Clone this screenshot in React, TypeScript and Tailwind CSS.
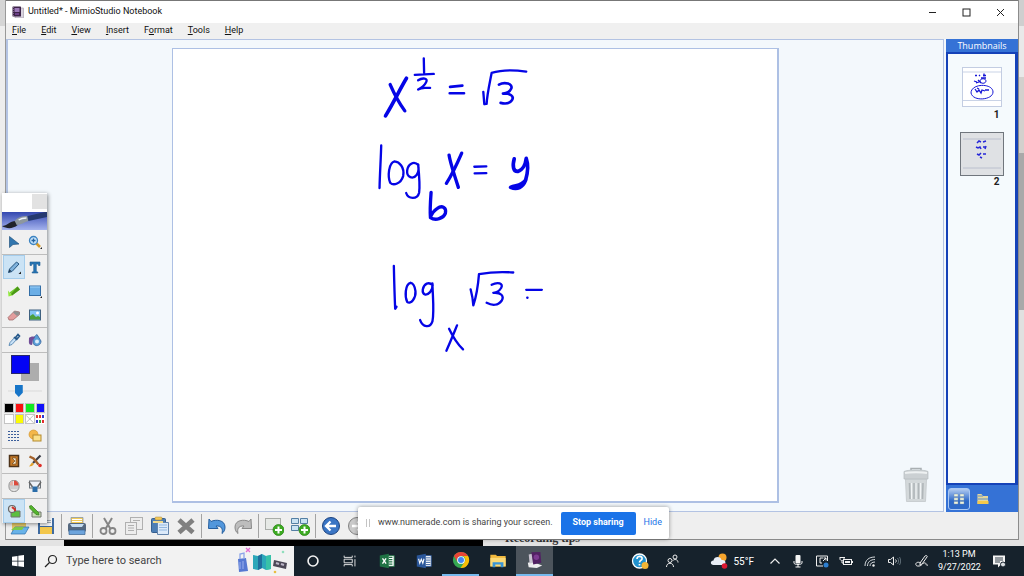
import type { ReactNode } from "react";
import { useState } from "react";

type IconProps = { children: ReactNode; className?: string; box?: string };

function Icon({ children, className = "size-5", box = "0 0 20 20" }: IconProps) {
  return (
    <svg viewBox={box} className={className} fill="none" aria-hidden="true">
      {children}
    </svg>
  );
}

/* title bar + menus */

const menus = [
  { before: "", key: "F", after: "ile" },
  { before: "", key: "E", after: "dit" },
  { before: "", key: "V", after: "iew" },
  { before: "", key: "I", after: "nsert" },
  { before: "F", key: "o", after: "rmat" },
  { before: "", key: "T", after: "ools" },
  { before: "", key: "H", after: "elp" },
];

function TitleBar() {
  return (
    <header className="flex h-[22px] shrink-0 items-center bg-white pl-[6px]">
      <Icon className="size-3" box="0 0 12 12">
        <rect x="3" y="2" width="8.5" height="10" fill="#d9d3df" stroke="#8d8695" strokeWidth=".5" />
        <rect x=".5" y=".5" width="8.5" height="10" rx=".6" fill="#3c2348" />
        <rect x="2.5" y="2" width="5" height="4" fill="#9b78b8" />
        <path d="M1.5 1v9" stroke="#9a8aa5" strokeWidth=".7" strokeDasharray="1 1" />
        <rect x="3" y="7" width="4" height="2" fill="#6b3f86" />
      </Icon>
      <h1 className="ml-1 text-[9px] text-[#111]">Untitled* - MimioStudio Notebook</h1>
      <div className="mr-px ml-auto flex">
        <button aria-label="Minimize" className="flex h-5 w-[34px] items-center justify-center">
          <Icon className="size-[9px]" box="0 0 9 9">
            <path d="M1 4.5h7" stroke="#222" />
          </Icon>
        </button>
        <button aria-label="Maximize" className="flex h-5 w-[34px] items-center justify-center">
          <Icon className="size-[9px]" box="0 0 9 9">
            <rect x="1" y="1" width="7" height="7" stroke="#222" />
          </Icon>
        </button>
        <button aria-label="Close" className="flex h-5 w-[34px] items-center justify-center">
          <Icon className="size-[9px]" box="0 0 9 9">
            <path d="M1 1l7 7M8 1l-7 7" stroke="#222" />
          </Icon>
        </button>
      </div>
    </header>
  );
}

function MenuBar() {
  return (
    <nav className="flex h-4 shrink-0 items-center gap-[15px] bg-[#f0f0f0] pl-[6px] text-[9px] text-[#111]">
      {menus.map((m) => (
        <button key={m.key + m.after}>
          {m.before}
          <span className="underline">{m.key}</span>
          {m.after}
        </button>
      ))}
    </nav>
  );
}

/* notebook page */

function Handwriting() {
  return (
    <svg
      viewBox="173 49 604 453"
      className="size-full"
      fill="none"
      stroke="#0505e6"
      strokeLinecap="round"
      strokeLinejoin="round"
      role="img"
      aria-label="Handwritten equations"
    >
      <g transform="translate(360 46) scale(.33333)" strokeWidth="8">
        <path d="M91 116C98 132 116 169 135 195" strokeWidth="10" />
        <path d="M140 97C121 128 105 164 77 210" strokeWidth="11" />
        <path d="M192 37L193 80M165 87L222 84M175 103C189 94 206 97 199 109C193 121 181 128 175 131C188 122 198 127 211 126" strokeWidth="7" />
        <path d="M271 123L308 119M270 142L313 142" />
        <path d="M371 138L374 175L381 174C382 148 390 112 396 81C423 72 460 71 500 77" strokeWidth="7" />
        <path d="M418 116C435 107 461 113 455 128C450 140 438 143 430 143C452 142 465 151 457 163C449 175 435 174 423 171" />
        <path d="M64 299C63 340 60 380 59 427" strokeWidth="7" />
        <path d="M104 347C86 352 83 392 91 411C101 421 123 414 130 391C135 364 118 348 104 347" strokeWidth="7" />
        <path d="M176 358C162 344 144 355 142 375C140 396 160 402 171 387C177 378 177 366 175 356C178 386 181 420 178 441C173 462 145 461 139 442" strokeWidth="7" />
        <path d="M268 328C272 353 284 389 296 425" strokeWidth="10" />
        <path d="M306 322C293 352 278 385 260 413" strokeWidth="10" />
        <path d="M344 363L380 362M345 383L380 382" strokeWidth="7" />
        <path d="M464 339C458 361 461 378 475 377C490 373 498 354 500 338C507 358 505 381 498 404C490 425 473 433 453 425C468 417 484 423 499 402" strokeWidth="11" />
        <path d="M214 440C212 467 210 493 212 516C228 527 251 518 257 503C261 486 247 478 233 488C222 495 215 506 212 516" strokeWidth="10" />
      </g>
      <g transform="translate(370 251) scale(.33333)" strokeWidth="7">
        <path d="M72 46C73 89 74 131 76 175L80 169" />
        <path d="M122 97C105 102 105 139 112 154C123 164 139 142 137 122C135 106 130 98 122 97" />
        <path d="M189 104C177 93 163 99 159 117C157 134 170 137 181 125C188 116 189 106 188 99C189 139 194 184 188 213C181 234 159 231 151 209" />
        <path d="M303 117C307 132 310 149 311 165C317 147 325 108 328 71C361 65 394 63 431 66" />
        <path d="M366 103C385 93 402 99 395 112C389 123 377 127 371 127C394 125 405 137 396 151C386 165 368 166 351 157" />
        <path d="M470 118L517 118M473 142L474 142" />
        <path d="M238 235C249 258 264 282 280 297M262 225C251 252 241 277 230 301" />
      </g>
    </svg>
  );
}

function TrashCan() {
  return (
    <Icon className="h-9 w-[26px]" box="0 0 26 36">
      <path d="M8 3V1.500h10V3" stroke="#a9afb2" strokeWidth="1.500" />
      <path d="M2.500 12h21l-1 22.500h-19z" fill="#d3d8da" stroke="#c9ced1" />
      <path d="M1 4.500c4-2 20-2 24 0V12H1z" fill="#cbd0d3" stroke="#b5bbbe" strokeWidth=".7" />
      <path d="M2 6c5-1 17-1 22 0" stroke="#eef1f2" strokeWidth="2" />
      <path d="M6.500 16l.5 16M11 16v16M15.500 16v16M20 16l-.5 16" stroke="#b0b6b9" strokeWidth="1.600" />
      <path d="M8.500 16v16M13 16v16M17.500 16v16" stroke="#f1f4f5" />
    </Icon>
  );
}

function Workspace() {
  return (
    <main className="relative mr-[2px] flex min-w-0 flex-1 justify-center border border-[#b3c3e3] bg-[#f3f8fc] pt-2 pb-2">
      <div className="aspect-[605/454] h-full border border-r-2 border-b-2 border-[#adc0e4] bg-white">
        <Handwriting />
      </div>
      <button aria-label="Trash" className="absolute right-[14px] bottom-2">
        <TrashCan />
      </button>
    </main>
  );
}

/* thumbnails */

function Thumbnails() {
  const [selected, setSelected] = useState(2);
  const thumbClass = (n: number) =>
    n === selected
      ? "size-11 border border-[#70767d] bg-[#dfe1e4] p-[2px]"
      : "size-10 border border-[#c3cde2] bg-white";

  return (
    <aside className="flex w-[72px] shrink-0 flex-col bg-[#3572d6]">
      <h2 className="h-[13px] text-center font-['Open_Sans',sans-serif] text-[9px] leading-[14px] text-white">Thumbnails</h2>
      <ol className="flex flex-1 flex-col items-center border-2 border-r-[3px] border-[#1542b8] bg-[#f5fafd] pt-[13px] text-[10px] font-bold text-[#222]">
        <li className="flex flex-col items-center">
          <button className={thumbClass(1)} onClick={() => setSelected(1)} aria-label="Page 1">
            <Icon className="size-full" box="0 0 38 38">
              <path d="M0 4h38M0 32.500h38" stroke="#bbc8e0" strokeWidth=".8" />
              <g stroke="#1717d6" strokeWidth="1.300">
                <path d="M12 7.500h2M16 7l1 1M20 7.500h3M21 5.500v3M11 13l3 1M15 12l3 3M13 15l3-1M18 10h5" />
                <path d="M17 13c0-3 6-3 6 0s-6 3-6 0" strokeWidth="1" />
                <path d="M12 21l2 3 2-2 2 3 1-3 3 1M22 22h4M14 20l2 1" />
                <path d="M8 25c0-10 22-10 22-1 0 8-20 10-22 1z" strokeWidth="1" />
              </g>
            </Icon>
          </button>
          <span className="mr-[2px] self-end leading-[15px]">1</span>
        </li>
        <li className="mt-[10px] flex flex-col items-center">
          <button className={thumbClass(2)} onClick={() => setSelected(2)} aria-label="Page 2">
            <Icon className="size-full" box="0 0 38 38">
              <path d="M0 4h38M0 33h38" stroke="#b1b8c8" strokeWidth=".8" />
              <g stroke="#2727d8" strokeWidth="1.500">
                <path d="M14 8l2-2 2 1M20 7l3-1M13 12l2 1 2-1 1 2M20 12h2M23 11l-1 3M14 19l2 1 2-2M20 19h3M17 22l2 1" />
              </g>
            </Icon>
          </button>
          <span className="mr-1 self-end leading-3">2</span>
        </li>
      </ol>
      <div className="flex h-[27px] items-center gap-[2px] pl-[2px]">
        <button
          aria-label="Thumbnail view"
          className="flex size-[22px] items-center justify-center rounded-[3px] border border-[#a9c8f5] bg-linear-to-b from-[#b2cbef] to-[#2d69c9] to-60%"
        >
          <Icon className="size-3" box="0 0 12 12">
            <path d="M1 1h4v2.500H1zM7 1h4v2.500H7zM1 4.800h4v2.500H1zM7 4.800h4v2.500H7zM1 8.500h4V11H1zM7 8.500h4V11H7z" fill="#eef3dc" stroke="#708ba9" strokeWidth=".4" />
          </Icon>
        </button>
        <button aria-label="Gallery" className="flex size-[22px] items-center justify-center">
          <Icon className="size-3" box="0 0 12 12">
            <path d="M.5 1h4l1 2h5.500v8H.5z" fill="#e5d79b" />
            <path d="M1 3h5M1 6h10" stroke="#8aa6ba" strokeWidth="1.500" />
            <path d="M.5 8h11v3H.5z" fill="#f4c84b" />
          </Icon>
        </button>
      </div>
    </aside>
  );
}

/* bottom toolbar */

const plusBadge = (
  <>
    <circle cx="14.500" cy="14" r="5.500" fill="#3dab22" stroke="#23800f" strokeWidth=".7" />
    <path d="M14.500 10.500v7M11 14h7" stroke="#fff" strokeWidth="2" />
  </>
);

const toolGroups: { label: string; icon: ReactNode }[][] = [
  [
    {
      label: "Open",
      icon: (
        <>
          <path d="M2 4h6l2 2h6v9H2z" fill="#e3c765" />
          <path d="M1 18l4-7h14l-4 7z" fill="#68b2e8" stroke="#2d6fae" strokeWidth=".7" />
          <path d="M1 14l4-3h9l-2 3H1z" fill="#7ccb4a" />
        </>
      ),
    },
    {
      label: "Save",
      icon: (
        <>
          <path d="M2 2h16v16H2z" fill="#3e6aa0" />
          <path d="M4 2h12v8H4z" fill="#f3f5f7" />
          <path d="M4 11h12v7H4z" fill="#f3c74c" />
          <path d="M5 4.500h10M5 6.500h10" stroke="#8b99a8" strokeWidth=".8" />
        </>
      ),
    },
  ],
  [
    {
      label: "Print",
      icon: (
        <>
          <path d="M4 1.500h12v8H4z" fill="#f4cb57" stroke="#7d8fa5" strokeWidth=".7" />
          <path d="M5 3.500h10M5 5.500h10" stroke="#fff" />
          <rect x="1" y="7" width="18" height="9" rx="2" fill="#55687f" />
          <path d="M3 8h14l-2 3H5z" fill="#c5ddf2" />
          <path d="M2 14h16v4.500H2z" fill="#6da4dc" stroke="#38638f" strokeWidth=".7" />
        </>
      ),
    },
  ],
  [
    {
      label: "Cut",
      icon: (
        <g stroke="#858585">
          <path d="M6 2l6.500 11M14 2L7.500 13" strokeWidth="2" />
          <circle cx="5.500" cy="15" r="3" strokeWidth="1.800" />
          <circle cx="14.500" cy="15" r="3" strokeWidth="1.800" />
        </g>
      ),
    },
    {
      label: "Copy",
      icon: (
        <g stroke="#b0b0b0" fill="#ededed">
          <rect x="6.500" y="1.500" width="12" height="12" />
          <rect x="1.500" y="6.500" width="11" height="12" />
          <path d="M9 4.500h7M4 9.500h6M4 12h6M4 14.500h6" />
        </g>
      ),
    },
    {
      label: "Paste",
      icon: (
        <>
          <rect x="1.500" y="2.500" width="14" height="14" rx="1" fill="#4c7eb5" stroke="#365f8f" />
          <rect x="5" y="1" width="7" height="3" rx="1" fill="#f3c95a" stroke="#a28741" strokeWidth=".5" />
          <path d="M7.500 6.500h11v12h-11z" fill="#dceafa" stroke="#6485ad" />
          <path d="M9 9h8M9 11.500h8M9 14h8" stroke="#92b7df" />
          <path d="M3 5h10v2H3z" fill="#f0d98c" />
        </>
      ),
    },
    {
      label: "Delete",
      icon: <path d="M3 4l14 12.500M17 4L3 16.500" stroke="#808080" strokeWidth="4.800" />,
    },
  ],
  [
    {
      label: "Undo",
      icon: (
        <path d="M2 3l2 2.500C9 3 18 4 18 11c0 3-1 5-3 6.500 1-4 0-8-6-7.500l2 2.500H1.500z" fill="#5297dc" stroke="#265f9f" />
      ),
    },
    {
      label: "Redo",
      icon: (
        <path d="M18 3l-2 2.500C11 3 2 4 2 11c0 3 1 5 3 6.500-1-4 0-8 6-7.500l-2 2.500h9.500z" fill="#bdbdbd" stroke="#898989" />
      ),
    },
  ],
  [
    {
      label: "Insert page",
      icon: (
        <>
          <rect x="1.500" y="2.500" width="15" height="11" fill="#e6e9e6" stroke="#a9ada9" />
          {plusBadge}
        </>
      ),
    },
    {
      label: "Insert layout",
      icon: (
        <>
          <path d="M1.500 2.500h7v5h-7zM10.500 2.500h7v5h-7zM1.500 9.500h7v5h-7z" fill="#c9e2f3" stroke="#547fa3" />
          {plusBadge}
        </>
      ),
    },
  ],
  [
    {
      label: "Previous page",
      icon: (
        <>
          <circle cx="10" cy="10" r="8.500" fill="#3a75c4" stroke="#1d437f" />
          <path d="M15 10H6M9.500 5.500L5 10l4.500 4.500" stroke="#fff" strokeWidth="2.300" />
        </>
      ),
    },
    {
      label: "Next page",
      icon: (
        <>
          <circle cx="10" cy="10" r="8.500" fill="#c9c9c9" stroke="#828282" />
          <path d="M5 10h9M10.500 5.500L15 10l-4.500 4.500" stroke="#fff" strokeWidth="2.300" />
        </>
      ),
    },
  ],
];

function Toolbar() {
  return (
    <div role="toolbar" className="flex h-7 shrink-0 items-center border-b border-[#8a8a8a] bg-[#efefef] pl-px">
      {toolGroups.map((group, i) => (
        <div key={i} className="flex items-center">
          {i > 0 && <span className="mx-[2px] h-6 w-px bg-[#a3a3a3]" />}
          {group.map((tool) => (
            <button key={tool.label} aria-label={tool.label} className="flex h-6 w-[26px] items-center justify-center">
              <Icon>{tool.icon}</Icon>
            </button>
          ))}
        </div>
      ))}
    </div>
  );
}

/* floating tool palette */

type Tool = { label: string; icon: ReactNode; active?: boolean };

const selectTools: Tool[] = [
  {
    label: "Select",
    icon: <path d="M2.500 1.500v11l3.500-3 6-.5z" fill="#3276ae" stroke="#24557f" strokeWidth=".7" />,
  },
  {
    label: "Zoom",
    icon: (
      <>
        <path d="M8 8l4 4" stroke="#d59a27" strokeWidth="2.500" />
        <circle cx="5.500" cy="5.500" r="4" fill="#c6e3fa" stroke="#3c83c1" strokeWidth="1.300" />
        <path d="M5.500 3.500v4M3.500 5.500h4" stroke="#24639e" strokeWidth="1.300" />
        <path d="M14 14v-2l-2 2z" fill="#222" />
      </>
    ),
  },
];

const drawTools: Tool[] = [
  {
    label: "Pen",
    active: true,
    icon: (
      <>
        <path d="M1.500 12.500l1-3.500 7-7 2.500 2-7 7.500z" fill="#7fb2dc" stroke="#28567f" />
        <path d="M1.500 12.500l1-3 2 1.500z" fill="#20374c" />
        <path d="M14 14v-2.500L11.500 14z" fill="#222" />
      </>
    ),
  },
  {
    label: "Text",
    icon: <path d="M2 2h10v3.500h-1.500L10 4H8.300v7.500l1.500.5v1H4.200v-1l1.500-.5V4H4l-.5 1.500H2z" fill="#2674b3" stroke="#1e5e95" strokeWidth=".6" />,
  },
  {
    label: "Highlighter",
    icon: (
      <>
        <path d="M2.500 8.500l8-6 2.500 3-8 6z" fill="#6fc92a" />
        <path d="M10.500 2.500l2.500 3-8 6-1-1.300z" fill="#4b9718" />
        <path d="M1 6.500l1.500 2 2.500 3-3.500 1z" fill="#8fe83a" />
      </>
    ),
  },
  {
    label: "Rectangle",
    icon: (
      <>
        <rect x="1.500" y="2" width="11" height="9.500" fill="#6baee6" stroke="#326da6" />
        <path d="M2 3h10" stroke="#9ed0f8" />
        <path d="M14 14v-2l-2 2z" fill="#222" />
      </>
    ),
  },
  {
    label: "Eraser",
    icon: (
      <>
        <path d="M1 9.500L7.500 3l5 1v2.500L6 12H2z" fill="#e39c9c" stroke="#9b6262" strokeWidth=".7" />
        <path d="M6 4.500L10 8l2.500-2V4l-5-1z" fill="#909090" />
      </>
    ),
  },
  {
    label: "Picture",
    icon: (
      <>
        <rect x="1.500" y="2" width="11" height="10" fill="#83c5f4" stroke="#3f6180" />
        <path d="M2 11.500V8l3-2 3 3 2-1 2 1v2.500z" fill="#4ba03c" />
        <circle cx="9.500" cy="5" r="1.500" fill="#fff" />
      </>
    ),
  },
];

const colorTools: Tool[] = [
  {
    label: "Eyedropper",
    icon: (
      <>
        <path d="M2 12.500l1-3 5-5.500 2 2-5 5.500z" fill="#c8e1f7" stroke="#4479a8" strokeWidth=".8" />
        <path d="M7 4l3 3M8.500 4.500l2.500-3 1.500 1.500L10 6z" stroke="#27598b" strokeWidth="1.600" />
      </>
    ),
  },
  {
    label: "Fill",
    icon: (
      <>
        <path d="M5 5l4-3.500L13 8c0 6-8 6-8 1z" fill="#5a9ed8" stroke="#315f99" strokeWidth=".8" />
        <circle cx="9" cy="8.500" r="2" fill="#dcedfa" />
        <path d="M1 5c2-2 6-2 6 0-3 1-2 4-3 7-4 0-3-3-3-7z" fill="#714d98" />
      </>
    ),
  },
];

const styleTools: Tool[] = [
  {
    label: "Line style",
    icon: <path d="M1 2.500h12M1 5.500h12M1 8.500h12M1 11.500h12" stroke="#3c5f9c" strokeDasharray="2 1" />,
  },
  {
    label: "Shape style",
    icon: (
      <>
        <circle cx="5.500" cy="5.500" r="4.500" fill="#f3b74a" stroke="#cf8e27" strokeWidth=".6" />
        <rect x="5" y="6" width="8" height="6" fill="#fae08a" stroke="#b58a2c" />
      </>
    ),
  },
];

const galleryTools: Tool[] = [
  {
    label: "Notebook",
    icon: (
      <>
        <rect x="2.500" y="1.500" width="9" height="11" fill="#c77b28" stroke="#4d3319" strokeWidth="1.500" />
        <path d="M5 4h4v6H5l3-3z" fill="#fff0cc" stroke="#59371a" strokeWidth=".6" />
      </>
    ),
  },
  {
    label: "Tools",
    icon: (
      <>
        <path d="M5 9L12.500 1.500" stroke="#383b45" strokeWidth="2.200" />
        <path d="M1.500 2.500l4 2 5 6" stroke="#a3612a" strokeWidth="2.400" />
        <path d="M1 12.500l3-4 2 1.500-2 2z" fill="#e1a22d" />
        <circle cx="12" cy="11.500" r="1.800" fill="#de2e28" />
      </>
    ),
  },
];

const deviceTools: Tool[] = [
  {
    label: "Right click",
    icon: (
      <>
        <rect x="2" y="1.500" width="10" height="11" rx="4.500" fill="#e4e4e4" stroke="#8d8d8d" />
        <path d="M7 1.500c3 0 4.500 2 4.500 5H7z" fill="#dd4a3c" />
        <path d="M3 7h8M3 9h8" stroke="#a5a5a5" strokeWidth=".7" />
        <path d="M3 6.500V5c0-2 2-3 3-3v4.500z" fill="#e3b0a6" />
      </>
    ),
  },
  {
    label: "Screen",
    icon: (
      <>
        <rect x="1.500" y="2" width="11" height="7" fill="#edf2f8" stroke="#6c737a" />
        <path d="M1 3l3.500 5M13 3L9.500 8" stroke="#666" strokeWidth="1.500" />
        <rect x="4.500" y="7.500" width="5" height="5.500" fill="#2b6da9" />
      </>
    ),
  },
];

const recordTools: Tool[] = [
  {
    label: "Screen annotation",
    active: true,
    icon: (
      <>
        <path d="M4 7h9v6H4z" fill="#5bbf40" stroke="#70756c" />
        <circle cx="5" cy="5" r="3.500" fill="#e3e3e3" stroke="#666" strokeWidth="1.200" />
        <path d="M5 3l3 2.500V7" stroke="#cf332c" strokeWidth="2" />
      </>
    ),
  },
  {
    label: "Annotate",
    icon: (
      <>
        <path d="M4 8h9v5H4z" fill="#c9dfb5" stroke="#70756c" />
        <path d="M1.500 2l2-.5 7 7 .5 2.500-3-.5-6-6z" fill="#54b52c" stroke="#37791b" strokeWidth=".7" />
      </>
    ),
  },
];

const swatches = [
  { name: "Black", className: "bg-black" },
  { name: "Red", className: "bg-[#fa1212]" },
  { name: "Green", className: "bg-[#10ea22]" },
  { name: "Blue", className: "bg-[#1010fa]" },
  { name: "White", className: "bg-white" },
  { name: "Yellow", className: "bg-[#fbfb04]" },
];

function ToolGrid({ tools, divided = true }: { tools: Tool[]; divided?: boolean }) {
  return (
    <div className={divided ? "grid grid-cols-2 border-b border-[#bdbdbd] px-px" : "grid grid-cols-2 px-px"}>
      {tools.map((tool) => (
        <button
          key={tool.label}
          aria-label={tool.label}
          className={
            tool.active
              ? "flex h-6 items-center justify-center border border-[#a5cdec] bg-[#cbe3f5]"
              : "flex h-6 items-center justify-center"
          }
        >
          <Icon className="size-[14px]" box="0 0 14 14">
            {tool.icon}
          </Icon>
        </button>
      ))}
    </div>
  );
}

function ToolPalette() {
  return (
    <section
      aria-label="Tools"
      className="absolute top-[193px] left-[2px] z-20 w-[45px] bg-[#f0f0f0] shadow-[1px_1px_4px_rgba(0,0,0,0.45)]"
    >
      <div className="flex h-[19px] justify-end bg-white">
        <span className="mt-px h-[15px] w-[15px] bg-[#e2e2e2]" />
      </div>
      <svg viewBox="0 0 46 18" preserveAspectRatio="none" className="h-[18px] w-full" aria-hidden="true">
        <defs>
          <linearGradient id="banner" x1="0" y1="0" x2="0" y2="1">
            <stop offset="0" stopColor="#3448b0" />
            <stop offset="1" stopColor="#a5b3ee" />
          </linearGradient>
        </defs>
        <rect width="46" height="18" fill="url(#banner)" />
        <path d="M0 14c5 0 8-5 14-5l2 4c-5 4-11 4-16 1z" fill="#20232b" />
        <path d="M13 9c3-4 8-5 13-5l1 5c-4 1-8 4-12 4z" fill="#8d979f" />
        <path d="M26 4L44 0h2v5L27 9z" fill="#25396f" />
        <path d="M17 8c3-2 5-2 8-2" stroke="#eef3fa" strokeWidth="1.500" fill="none" />
      </svg>
      <ToolGrid tools={selectTools} />
      <ToolGrid tools={drawTools} />
      <ToolGrid tools={colorTools} />
      <div className="relative h-[30px]">
        <span className="absolute top-[10px] left-[19px] size-[18px] bg-[#adadad]" />
        <button aria-label="Current color" className="absolute top-[2px] left-[9px] size-[19px] border border-[#26266b] bg-[#0303f5]" />
      </div>
      <input
        type="range"
        aria-label="Line width"
        defaultValue={28}
        className="mx-auto block h-4 w-[34px] appearance-none bg-linear-to-b from-transparent from-45% via-[#d2d2d2] via-50% to-transparent to-55% [&::-webkit-slider-thumb]:h-3 [&::-webkit-slider-thumb]:w-2 [&::-webkit-slider-thumb]:appearance-none [&::-webkit-slider-thumb]:bg-[#1775c8] [&::-webkit-slider-thumb]:[clip-path:polygon(0_0,100%_0,100%_65%,50%_100%,0_65%)]"
      />
      <div className="mt-1 grid grid-cols-4 gap-px px-[2px]">
        {swatches.map((s) => (
          <button key={s.name} aria-label={s.name} className={`h-[10px] border border-[#c4c4c4] ${s.className}`} />
        ))}
        <button aria-label="Transparent" className="flex h-[10px] items-center justify-center border border-[#c4c4c4] bg-white">
          <Icon className="size-2" box="0 0 8 8">
            <path d="M0 0l8 8M8 0L0 8" stroke="#999" strokeWidth=".7" />
          </Icon>
        </button>
        <button aria-label="More colors" className="flex h-[10px] items-center justify-center bg-white">
          <Icon className="size-2" box="0 0 8 8">
            <path d="M0 0h2v3H0zM3 0h2v3H3zM6 5h2v3H6z" fill="#e22f30" />
            <path d="M6 0h2v3H6zM0 5h2v3H0z" fill="#303ad2" />
            <path d="M3 5h2v3H3z" fill="#35a83a" />
          </Icon>
        </button>
      </div>
      <ToolGrid tools={styleTools} />
      <ToolGrid tools={galleryTools} />
      <ToolGrid tools={deviceTools} />
      <ToolGrid tools={recordTools} divided={false} />
    </section>
  );
}

function ShareBar() {
  return (
    <section
      aria-label="Screen sharing"
      className="absolute top-[507px] left-[358px] z-20 flex h-8 items-center rounded-[2px] bg-white pr-[7px] pl-2 text-[9px] whitespace-nowrap shadow-[0_0_4px_rgba(0,0,0,0.4)]"
    >
      <span className="mr-2 h-2 w-1 border-x border-[#c4c4c4]" />
      <p className="text-[#444]">www.numerade.com is sharing your screen.</p>
      <button className="ml-2 h-[23px] w-[75px] rounded-[2px] bg-[#1a73e8] font-bold text-white">Stop sharing</button>
      <button className="ml-2 text-[#1a73e8]">Hide</button>
    </section>
  );
}

/* windows taskbar */

const apps: { label: string; className?: string; icon: ReactNode }[] = [
  { label: "Cortana", icon: <circle cx="10" cy="10" r="5.500" stroke="#f2f2f2" strokeWidth="1.800" /> },
  {
    label: "Task View",
    icon: (
      <path d="M3.500 4v2h9V4M3.500 16v-2h9v2M3.500 8h9v4h-9zM15.500 4v2M15.500 8v8" stroke="#f2f2f2" />
    ),
  },
  {
    label: "Excel",
    icon: (
      <>
        <path d="M10 4h8v12h-8z" fill="#fff" stroke="#1f7244" />
        <path d="M12 6h4M12 8.500h4M12 11h4M12 13.500h4" stroke="#1f7244" strokeWidth="1.300" />
        <path d="M2 4l10-2v16L2 16z" fill="#1f7244" />
        <path d="M5 7l4 6M9 7l-4 6" stroke="#fff" strokeWidth="1.500" />
      </>
    ),
  },
  {
    label: "Word",
    icon: (
      <>
        <path d="M10 4h8v12h-8z" fill="#fff" stroke="#2a5699" />
        <path d="M12 6.500h5M12 9h5M12 11.500h5M12 14h5" stroke="#2a5699" />
        <path d="M2 4l10-2v16L2 16z" fill="#2a5699" />
        <path d="M4 7.500l1.300 5L7 8l1.700 4.500 1.300-5" stroke="#fff" strokeWidth="1.200" />
      </>
    ),
  },
  {
    label: "Chrome",
    className: "border-b-2 border-[#76b9ed]",
    icon: (
      <>
        <circle cx="10" cy="10" r="9" fill="#35a853" />
        <path d="M2.200 5.500A9 9 0 0 1 17.800 5.500H10a4.500 4.500 0 0 0-4 6.500z" fill="#e94436" />
        <path d="M17.800 5.500A9 9 0 0 1 9.500 19l4.500-6.700A4.500 4.500 0 0 0 12 5.500z" fill="#fbbc05" />
        <circle cx="10" cy="10" r="4.300" fill="#fff" />
        <circle cx="10" cy="10" r="3.300" fill="#4285f4" />
      </>
    ),
  },
  {
    label: "File Explorer",
    icon: (
      <>
        <path d="M1.500 3h6L9 4.500h9.500V16h-17z" fill="#f0b83d" />
        <path d="M1.500 6.500h17V16h-17z" fill="#fbd977" />
        <path d="M4 11.500h12V17h-3v-3H7v3H4z" fill="#3a94d6" />
      </>
    ),
  },
  {
    label: "MimioStudio",
    className: "border-b-2 border-[#76b9ed] bg-[#4c545c]",
    icon: (
      <>
        <path d="M2 13l5-1 11 4-6 3-9-1z" fill="#eee" />
        <path d="M3 4l4-1 1 10-4 1z" fill="#c8c2cf" />
        <path d="M6 1.500L16 1l1 12-9 2z" fill="#522163" />
        <circle cx="11.500" cy="7" r="3" fill="#7d3b91" />
      </>
    ),
  },
];

const tray: { label: string; width: string; icon: ReactNode }[] = [
  { label: "Show hidden icons", width: "w-[22px]", icon: <path d="M2.500 9.500L7 5l4.500 4.500" stroke="#eee" strokeWidth="1.200" /> },
  {
    label: "Microphone",
    width: "w-6",
    icon: (
      <>
        <rect x="4.500" y="1" width="5" height="8.500" rx="1" fill="#f4f4f4" />
        <path d="M3 7v2c0 2 8 2 8 0V7M7 10v3M4.500 13h5" stroke="#f4f4f4" />
      </>
    ),
  },
  {
    label: "Display",
    width: "w-6",
    icon: (
      <>
        <path d="M8 12H1.500V2h11v5M8 4H5v5h2M8 7l3-3M8.500 4H11v2.500" stroke="#eee" />
        <circle cx="11" cy="11" r="2.500" fill="#2e7fd0" />
      </>
    ),
  },
  {
    label: "Battery",
    width: "w-6",
    icon: (
      <>
        <rect x="4.500" y="5.500" width="8" height="5" stroke="#eee" />
        <path d="M6 7h5v2H6zM13 7h1v2h-1z" fill="#eee" />
        <path d="M1 3.500h5M1 3v2c0 2 4 2 4 0V3M3 7v2h2" stroke="#eee" />
      </>
    ),
  },
  {
    label: "Network",
    width: "w-6",
    icon: (
      <>
        <path d="M2 12C2 6 6 3 12 3M4.500 12c0-4 3-6.500 7.500-6.500M7 12c0-2.500 2-4 5-4" stroke="#d5d9dc" />
        <circle cx="10.500" cy="11.500" r="1.200" fill="#eee" />
      </>
    ),
  },
  {
    label: "Volume",
    width: "w-6",
    icon: (
      <>
        <path d="M1.500 5.500h2L6.500 3v8l-3-2.500h-2z" stroke="#eee" />
        <path d="M8.500 5.500c1 1 1 2 0 3" stroke="#eee" />
        <path d="M10.500 4c1.500 2 1.500 4 0 6M12.500 3c1.500 2.500 1.500 5.500 0 8" stroke="#718089" strokeWidth=".8" />
      </>
    ),
  },
  {
    label: "Windows Ink",
    width: "w-8",
    icon: (
      <path d="M5 9l5-7c1-1 3 0 2 1L7 10l-2 1zM6 9c-6-3-7 4-2 3 3 0 4-4 6-3 2 0 0 3 3 2" stroke="#eee" />
    ),
  },
];

function Taskbar() {
  return (
    <footer className="z-10 flex h-[30px] shrink-0 items-stretch bg-[#16222c] text-white">
      <button aria-label="Start" className="flex w-9 items-center justify-center">
        <Icon className="size-3" box="0 0 12 12">
          <path d="M0 1.700l5.500-.8v4.800H0zM6.300.8L12 0v5.700H6.300zM0 6.400h5.500v4.800L0 10.400zM6.300 6.400H12V12l-5.700-.8z" fill="#fff" />
        </Icon>
      </button>
      <label className="flex w-[258px] items-center bg-[#f2f2f2] pl-2">
        <Icon className="size-[14px]" box="0 0 14 14">
          <circle cx="8.500" cy="5.500" r="4" stroke="#222" strokeWidth="1.200" />
          <path d="M5.500 8.500L1 13" stroke="#222" strokeWidth="1.200" />
        </Icon>
        <input
          type="search"
          aria-label="Search"
          placeholder="Type here to search"
          className="ml-2 w-0 flex-1 text-[11px] text-[#333] outline-none placeholder:text-[#444]"
        />
        <Icon className="mr-[3px] h-7 w-[56px]" box="0 0 56 28">
          <path d="M3 12l8-1 2 13-9 1z" fill="#5678d2" />
          <path d="M5 12V7l4-1v6M5 15v7M8 14v8" stroke="#8ca4e8" strokeWidth="1.300" />
          <path d="M18 8l5 1 4-2 4 2 5-1v14l-5 1-4-2-4 2-5-1z" fill="#2ba7b9" />
          <path d="M23 9l4-2v14l-4 2z" fill="#1e6e9c" />
          <path d="M31 9l5-1v14l-5 1z" fill="#37c2a8" />
          <path d="M39 13l13 3-1 6-13-3z" fill="#4c4857" />
          <path d="M41 16l3 1M46 17l3 1" stroke="#bcb6c8" strokeWidth="2" />
          <path d="M11 1l4 4M15 1l-4 4" stroke="#e16bd2" strokeWidth="1.300" />
          <circle cx="48" cy="5" r="1.300" fill="#90dfbd" />
          <circle cx="40" cy="25" r="1.300" fill="#e9bd3f" />
        </Icon>
      </label>
      {apps.map((app) => (
        <button
          key={app.label}
          aria-label={app.label}
          className={`flex w-[37px] items-center justify-center ${app.className ?? ""}`}
        >
          <Icon className="size-[18px]">{app.icon}</Icon>
        </button>
      ))}
      <div className="ml-auto flex items-center">
        <button aria-label="Help" className="flex w-8 justify-center">
          <Icon className="size-[18px]" box="0 0 18 18">
            <circle cx="8.500" cy="9" r="7" fill="#2191ce" stroke="#fff" strokeWidth="1.300" />
            <path d="M6 7c0-4 6-3 5 0-.5 1.500-2.500 1.500-2.500 3.500M8.500 12v1.500" stroke="#fff" strokeWidth="1.700" />
            <circle cx="14" cy="13.500" r="3.500" fill="#f3b536" />
          </Icon>
        </button>
        <button aria-label="People" className="flex w-8 justify-center">
          <Icon className="size-[14px]" box="0 0 14 14">
            <circle cx="5" cy="6.500" r="2" stroke="#eee" />
            <path d="M1.500 13c0-5 7-5 7 0M8 6.500c1-1.500 5-1.500 5 2" stroke="#eee" />
            <circle cx="10" cy="3" r="2" stroke="#eee" />
          </Icon>
        </button>
        <button className="ml-[22px] flex items-center gap-1 text-[10px]">
          <Icon className="h-[18px] w-[19px]" box="0 0 19 18">
            <circle cx="12.500" cy="5.500" r="4" fill="#f6a52d" />
            <path d="M3.500 13C0 13 0 8.500 3.500 8.500 4 4 11 4 11.500 8c5-1 5 5 1.500 5z" fill="#e8eef6" />
            <circle cx="14.500" cy="14" r="2.800" fill="#dc1831" />
          </Icon>
          55°F
        </button>
        <div className="ml-[10px] flex">
          {tray.map((t) => (
            <button key={t.label} aria-label={t.label} className={`flex justify-center ${t.width}`}>
              <Icon className="size-[14px]" box="0 0 14 14">
                {t.icon}
              </Icon>
            </button>
          ))}
        </div>
        <div className="w-[42px] text-center text-[9px] leading-[13px]">
          <div>1:13 PM</div>
          <div>9/27/2022</div>
        </div>
        <button aria-label="Notifications" className="mr-[18px] ml-[12px]">
          <Icon className="size-[14px]" box="0 0 14 14">
            <path d="M1 1.500h12v9H9l-3 3v-3H1z" fill="#f4f4f4" />
            <path d="M3 4h8M3 6h8M3 8h5" stroke="#34414a" />
            <circle cx="11" cy="10.500" r="2.500" fill="#d8dde0" stroke="#16222c" />
          </Icon>
        </button>
      </div>
    </footer>
  );
}

export default function App() {
  return (
    <div className="relative flex h-screen flex-col overflow-hidden bg-[#e3e3e3] font-['Roboto','Noto_Sans',sans-serif]">
      <div className="z-10 flex min-h-0 flex-1">
        <div className="w-[6px] shrink-0 border-r border-[#999] bg-[#ededed]">
          <div className="h-[26px] bg-[#d5d5d5]" />
        </div>
        <div className="flex min-w-0 flex-1 flex-col border-t border-[#777] bg-[#efefef]">
          <TitleBar />
          <MenuBar />
          <div className="flex min-h-0 flex-1 border-l border-[#b3c3e3] bg-[#f3f8fc]">
            <Workspace />
            <Thumbnails />
          </div>
          <Toolbar />
        </div>
        <div className="w-[6px] shrink-0 border-l border-[#8c8c8c] bg-[#e0e0e0]">
          <div className="h-[26px] bg-[#cfcfcf]" />
          <div className="h-[51px] bg-[#e9e9e9]" />
          <div className="h-[76px] bg-[#d3d0cd]" />
          <div className="h-[157px] bg-[#a9a9a9]" />
        </div>
      </div>
      {/* web page showing behind the window */}
      <div className="flex h-[6px] shrink-0 items-end">
        <div className="h-full w-16" />
        <div className="h-full w-[419px] bg-black" />
        <p className="mb-[2px] ml-[22px] font-['Liberation_Serif',serif] text-[12px] leading-3 font-bold text-[#333]">Recording tips</p>
      </div>
      <Taskbar />
      <ToolPalette />
      <ShareBar />
    </div>
  );
}
